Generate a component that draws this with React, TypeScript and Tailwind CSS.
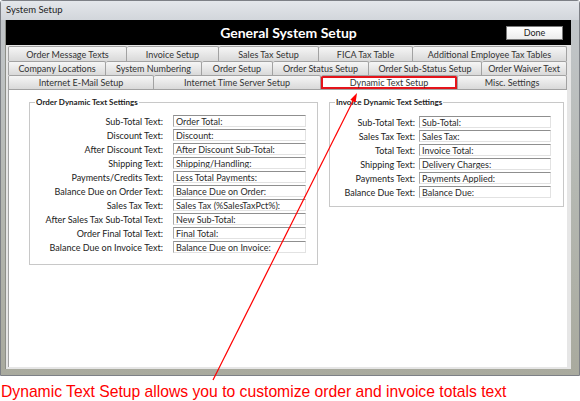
import React from "react";

type Tab = { label: string; w: string; active?: boolean };

const tabRows: { h: string; tabs: Tab[] }[] = [
  {
    h: "h-[15px]",
    tabs: [
      { label: "Order Message Texts", w: "w-[119px]" },
      { label: "Invoice Setup", w: "w-[92px]" },
      { label: "Sales Tax Setup", w: "w-[100px]" },
      { label: "FICA Tax Table", w: "w-[94px]" },
      { label: "Additional Employee Tax Tables", w: "flex-1" },
    ],
  },
  {
    h: "h-[14px]",
    tabs: [
      { label: "Company Locations", w: "w-[98px]" },
      { label: "System Numbering", w: "w-[96px]" },
      { label: "Order Setup", w: "w-[71px]" },
      { label: "Order Status Setup", w: "w-[96px]" },
      { label: "Order Sub-Status Setup", w: "w-[113px]" },
      { label: "Order Waiver Text", w: "flex-1" },
    ],
  },
  {
    h: "h-[14px]",
    tabs: [
      { label: "Internet E-Mail Setup", w: "w-[146px]" },
      { label: "Internet Time Server Setup", w: "w-[167px]" },
      { label: "Dynamic Text Setup", w: "w-[137px]", active: true },
      { label: "Misc. Settings", w: "flex-1" },
    ],
  },
];

const orderFields = [
  ["Sub-Total Text:", "Order Total:"],
  ["Discount Text:", "Discount:"],
  ["After Discount Text:", "After Discount Sub-Total:"],
  ["Shipping Text:", "Shipping/Handling:"],
  ["Payments/Credits Text:", "Less Total Payments:"],
  ["Balance Due on Order Text:", "Balance Due on Order:"],
  ["Sales Tax Text:", "Sales Tax (%SalesTaxPct%):"],
  ["After Sales Tax Sub-Total Text:", "New Sub-Total:"],
  ["Order Final Total Text:", "Final Total:"],
  ["Balance Due on Invoice Text:", "Balance Due on Invoice:"],
];

const invoiceFields = [
  ["Sub-Total Text:", "Sub-Total:"],
  ["Sales Tax Text:", "Sales Tax:"],
  ["Total Text:", "Invoice Total:"],
  ["Shipping Text:", "Delivery Charges:"],
  ["Payments Text:", "Payments Applied:"],
  ["Balance Due Text:", "Balance Due:"],
];

function Field({ value }: { value: string }) {
  return (
    <div className="flex h-[12px] items-center overflow-hidden border border-t-[#8f8f8f] border-l-[#a8a8a8] border-r-[#e2e2e2] border-b-[#e2e2e2] bg-white pl-[2px] text-[9px] leading-none text-[#2a2a2a]">
      {value}
    </div>
  );
}

function GroupBox({
  title,
  className,
  children,
}: {
  title: string;
  className: string;
  children: React.ReactNode;
}) {
  return (
    <div className={`relative border border-[#c8c8c8] ${className}`}>
      <span className="absolute -top-[7px] left-[5px] bg-white px-[1px] text-[8px] leading-[12px] font-bold text-[#222]">
        {title}
      </span>
      {children}
    </div>
  );
}

export default function App() {
  return (
    <div className="relative flex h-[401px] w-[580px] flex-col bg-white font-['Lato',sans-serif]">
      {/* Window */}
      <div className="flex h-[376px] flex-col rounded-t-[3px] border border-[#7d8086] bg-gradient-to-b from-[#c3c7cc] via-[#b5b8b2] to-[#a9aa9e]">
        {/* Title bar */}
        <div className="flex h-[19px] items-center bg-gradient-to-b from-[#e4e7eb] to-[#d2d6db] pl-[5px] text-[9.5px] text-[#222]">
          System Setup
        </div>

        {/* Client area */}
        <div className="ml-[4px] mr-[8px] flex flex-1 flex-col border-l border-[#8d8f88] bg-[#e6e6e6]">
          {/* Black header */}
          <div className="grid h-[25px] grid-cols-[1fr_auto_1fr] items-center bg-black">
            <div />
            <div className="text-[14px] font-bold text-white">General System Setup</div>
            <div className="flex justify-end pr-[8px]">
              <div className="flex h-[14px] w-[57px] items-center justify-center border border-[#7a7a7a] bg-gradient-to-b from-white to-[#ececec] text-[9px] text-[#222]">
                Done
              </div>
            </div>
          </div>

          {/* Tabs + panel */}
          <div className="flex flex-1 flex-col pt-[1px] pr-[4px] pb-[2px] pl-[2px]">
            {tabRows.map((row, ri) => (
              <div key={ri} className={`flex ${row.h}`}>
                {row.tabs.map((t, ti) => (
                  <div
                    key={t.label}
                    className={`${t.w} flex items-center justify-center rounded-t-[2px] border-t border-r border-[#a2a2a2] text-[9px] leading-none text-[#333] ${
                      ti === 0 ? "border-l" : ""
                    } ${
                      t.active
                        ? "bg-white ring-2 ring-inset ring-[#e4141b]"
                        : "bg-gradient-to-b from-[#f6f6f6] to-[#d9d9d9]"
                    }`}
                  >
                    {t.label}
                  </div>
                ))}
              </div>
            ))}

            <div className="flex flex-1 items-start gap-[11px] border-t border-l border-[#a2a2a2] bg-white pt-[12px] pl-[20px]">
              <GroupBox title="Order Dynamic Text Settings" className="h-[163px] w-[289px] pt-[12px]">
                <div className="flex flex-col gap-[2px]">
                  {orderFields.map(([label, value]) => (
                    <div key={label} className="flex items-center">
                      <div className="w-[133px] text-right text-[9px] leading-none text-[#222]">{label}</div>
                      <div className="ml-[10px] w-[133px]">
                        <Field value={value} />
                      </div>
                    </div>
                  ))}
                </div>
              </GroupBox>

              <GroupBox title="Invoice Dynamic Text Settings" className="h-[105px] w-[235px] pt-[13px]">
                <div className="flex flex-col gap-[2px]">
                  {invoiceFields.map(([label, value]) => (
                    <div key={label} className="flex items-center">
                      <div className="w-[85px] text-right text-[9px] leading-none text-[#222]">{label}</div>
                      <div className="ml-[4px] w-[132px]">
                        <Field value={value} />
                      </div>
                    </div>
                  ))}
                </div>
              </GroupBox>
            </div>
          </div>
        </div>
        <div className="h-[6px]" />
      </div>

      {/* Caption */}
      <div className="mt-[7px] pl-[1px] font-['Liberation_Sans',Arial,sans-serif] text-[15.7px] leading-[18px] text-[#ff0000]">
        Dynamic Text Setup allows you to customize order and invoice totals text
      </div>

      {/* Annotation arrow */}
      <svg className="pointer-events-none absolute inset-0" width="580" height="401" viewBox="0 0 580 401">
        <line x1="213" y1="380" x2="354" y2="99" stroke="#ff0000" strokeWidth="1.2" />
        <polygon points="357,93 355.6,102.4 350.3,99.7" fill="#ff0000" />
      </svg>
    </div>
  );
}
